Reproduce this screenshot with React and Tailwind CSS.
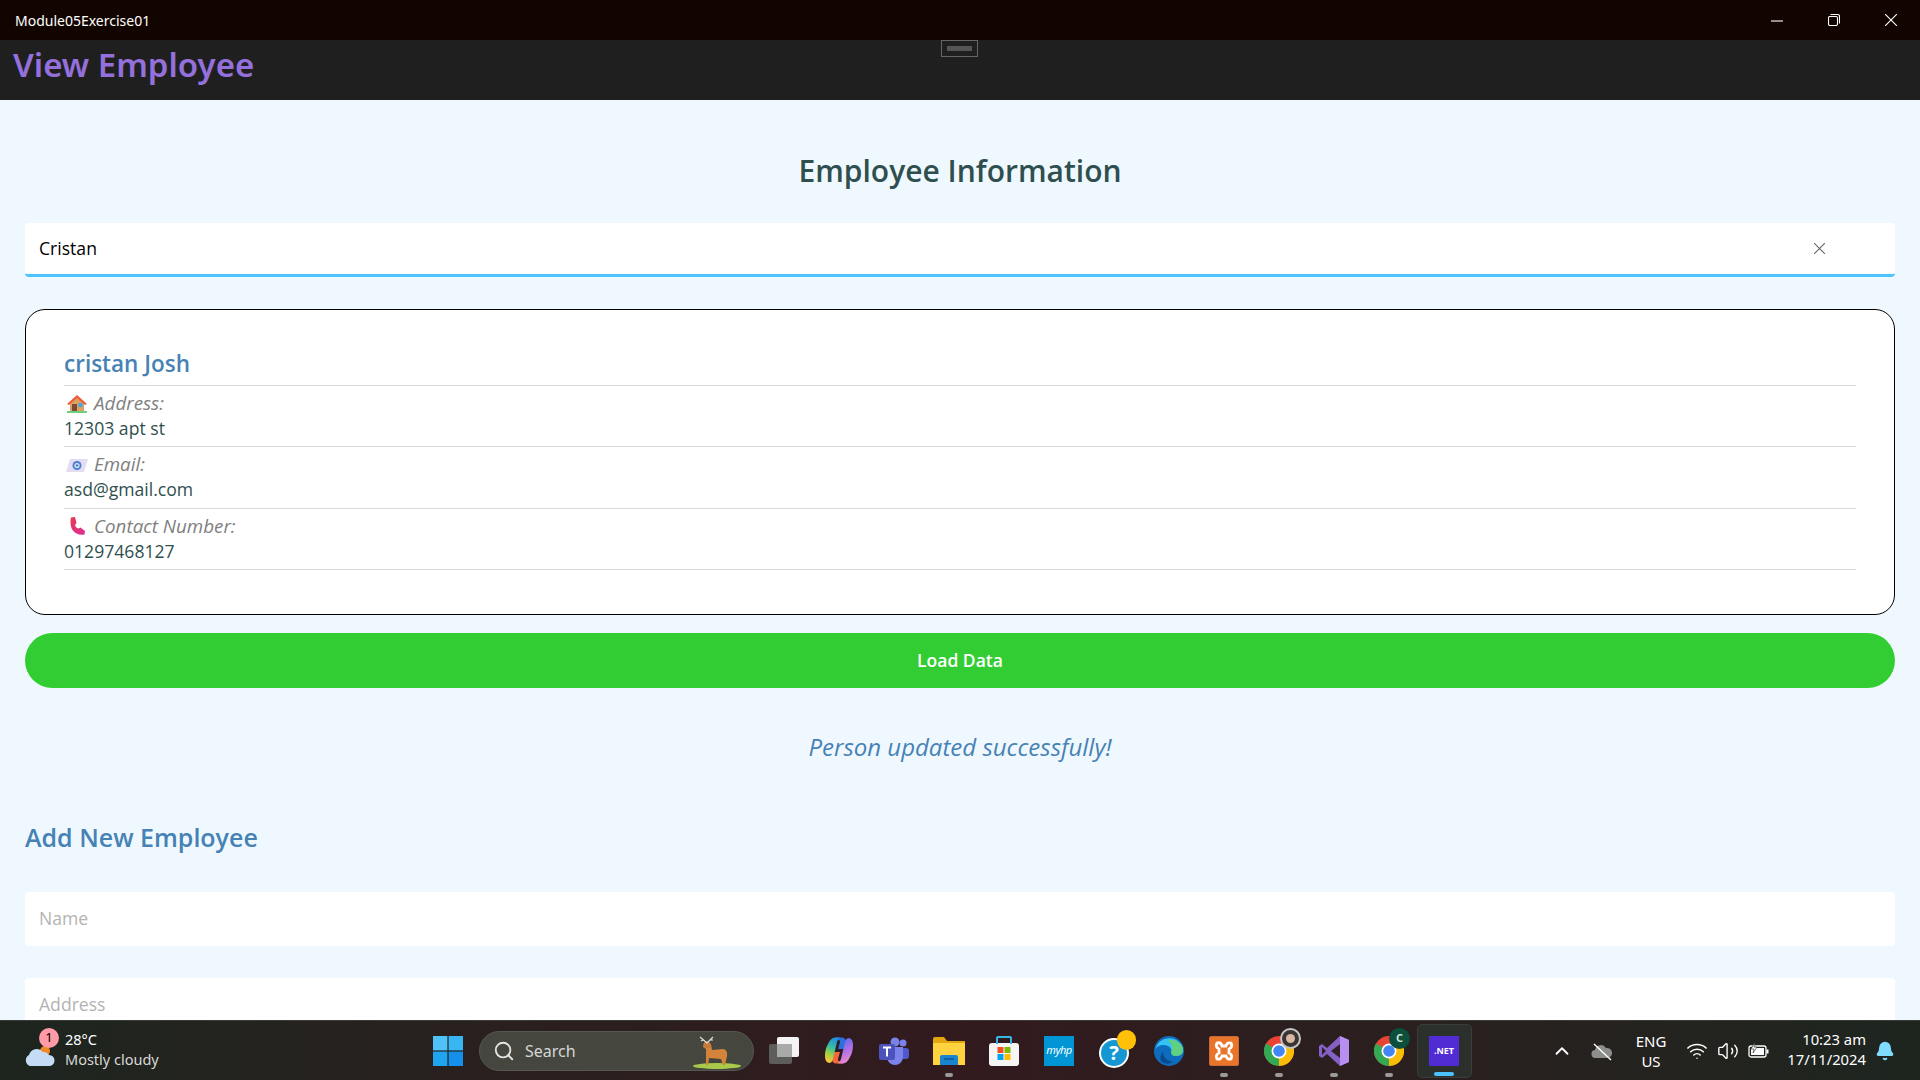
import React from "react";
import { Search, ChevronUp, Wifi, Volume2, Bell } from "lucide-react";

const mainFont = "font-['Open_Sans','Noto_Sans',sans-serif]";

function HouseIcon() {
  return (
    <svg width="22" height="20" viewBox="0 0 22 20">
      <rect x="1" y="17" width="20" height="2" fill="#6fcf7a" />
      <path d="M4 9 L11 3 L18 9 V17 H4 Z" fill="#e0a060" />
      <path d="M1 10 L11 1 L21 10 L19 11 L11 4 L3 11 Z" fill="#ef5a38" />
      <rect x="6" y="10" width="5" height="7" fill="#7a4a3a" />
      <rect x="12.5" y="9" width="4" height="4" fill="#3fa9e8" />
    </svg>
  );
}

function MailIcon() {
  return (
    <svg width="22" height="14" viewBox="0 0 22 14">
      <path d="M4 1 H22 L18 14 H0 Z" fill="#e4dcf2" />
      <circle cx="11" cy="7.5" r="4.5" fill="#4d7fd0" />
      <circle cx="11" cy="7.5" r="2.6" fill="#d8e4f8" />
      <circle cx="11" cy="7.5" r="1.3" fill="#4d7fd0" />
    </svg>
  );
}

function PhoneIcon() {
  return (
    <svg width="22" height="18" viewBox="0 0 22 18">
      <defs>
        <linearGradient id="phoneFill" x1="0" y1="0" x2="1" y2="1">
          <stop offset="0" stopColor="#e8394f" />
          <stop offset="1" stopColor="#dd2f9a" />
        </linearGradient>
      </defs>
      <path
        d="M5 0.5 L9 0 L10.5 6 L9 8 C9.5 10 10.5 11 12.5 11.5 L14.5 10.5 L19 14 L18.5 17.5 C14 18.5 9 17 6.5 13 C4.5 9.5 4 5 5 0.5 Z"
        fill="url(#phoneFill)"
      />
    </svg>
  );
}

function InfoRow({ icon, label, value }) {
  return (
    <div className="border-b border-[#d9d9d9] h-[61.33px] pt-[5px]">
      <div className="flex items-center h-[25px] text-[18.8px] italic text-[#808080] leading-none">
        <span className="w-[30px] pl-[2px] flex justify-start">{icon}</span>
        <span>{label}</span>
      </div>
      <div className="text-[17.6px] text-[#2f4f4f] leading-[24px]">{value}</div>
    </div>
  );
}

function TextBox({ placeholder }) {
  return (
    <div className="h-[54px] bg-white rounded-[4px] pl-[14px] pb-[2px] flex items-center text-[17.6px] text-[#b3b3b3] shrink-0">
      {placeholder}
    </div>
  );
}

function TaskIcon({ children, running, active }) {
  return (
    <div
      className={`relative w-[55px] h-[54px] flex items-center justify-center rounded-[5px] ${active ? "bg-[#2c302d] border border-[#3a3d3a]" : ""}`}
    >
      {children}
      {running && !active && (
        <span className="absolute bottom-[1px] w-[8px] h-[4px] rounded-full bg-[#9a9a9a]" />
      )}
      {active && (
        <span className="absolute bottom-[1px] w-[20px] h-[4px] rounded-full bg-[#4cc2ff]" />
      )}
    </div>
  );
}

function ChromeIcon({ children }) {
  return (
    <div className="relative w-[30px] h-[30px]">
      <svg width="30" height="30" viewBox="0 0 30 30">
        <circle cx="15" cy="15" r="15" fill="#ea4335" />
        <path d="M15 15 L2 7.5 A15 15 0 0 0 15 30 Z" fill="#34a853" />
        <path d="M15 15 L28 7.5 A15 15 0 0 1 15 30 Z" fill="#fbbc05" />
        <path d="M15 8 A7 7 0 0 1 28 7.5 L15 7.5 Z" fill="#ea4335" />
        <circle cx="15" cy="15" r="7.5" fill="#fff" />
        <circle cx="15" cy="15" r="5.8" fill="#4285f4" />
      </svg>
      {children}
    </div>
  );
}

function CopilotIcon() {
  return (
    <svg width="30" height="27" viewBox="0 0 30 27">
      <defs>
        <linearGradient id="copilotLeft" x1="0.6" y1="0" x2="0.3" y2="1">
          <stop offset="0" stopColor="#1f8fe0" />
          <stop offset="0.4" stopColor="#38c0a0" />
          <stop offset="0.7" stopColor="#a8d040" />
          <stop offset="1" stopColor="#ffc23c" />
        </linearGradient>
        <linearGradient id="copilotRight" x1="0.4" y1="0" x2="0.7" y2="1">
          <stop offset="0" stopColor="#5a6ae8" />
          <stop offset="0.5" stopColor="#b070e8" />
          <stop offset="1" stopColor="#f090c8" />
        </linearGradient>
      </defs>
      <path d="M11 0.5 H18 Q21 0.5 22 4 L24 12 H14 L16 5 Q16.5 3 14 3 Z" fill="#2a6fe0" />
      <path d="M19 26.5 H12 Q9 26.5 8 23 L6 15 H16 L14 22 Q13.5 24 16 24 Z" fill="#f2683c" />
      <path d="M11 0.5 H16 Q14 1.5 13 5 L9 22 Q8 26 5 26 Q1 25 1 19 Q1 12 4 7 Q7 0.5 11 0.5 Z" fill="url(#copilotLeft)" />
      <path d="M19 26.5 H14 Q16 25.5 17 22 L21 5 Q22 1 25 1 Q29 2 29 8 Q29 15 26 20 Q23 26.5 19 26.5 Z" fill="url(#copilotRight)" />
    </svg>
  );
}

function Taskbar() {
  return (
    <div className="h-[60px] shrink-0 flex items-center border-t border-[#3a3a38] bg-gradient-to-r from-[#1d251f] via-[#321a1e] to-[#1d251f] font-['Noto_Sans','Open_Sans',sans-serif] text-white">
      <div className="w-[433px] shrink-0 flex items-center pl-[23px] relative">
        <div className="relative w-[42px] h-[44px] -translate-y-[4px]">
          <svg width="32" height="22" viewBox="0 0 32 22" className="absolute left-0 top-[20px]">
            <circle cx="22" cy="6" r="5" fill="#f08a24" />
            <path d="M7 21 A6 6 0 0 1 6 10 A8 8 0 0 1 20 7 A7 7 0 0 1 26 10 A5.5 5.5 0 0 1 26 21 Z" fill="#c4dcf6" />
          </svg>
          <span className="absolute left-[16px] top-[3px] w-[20px] h-[20px] rounded-full bg-[#ff9aa6] text-black text-[13px] flex items-center justify-center leading-none">
            1
          </span>
        </div>
        <div className="text-[14.5px] leading-[20px] -translate-y-[2px]">
          <div>28°C</div>
          <div className="text-[#d8d8d8]">Mostly cloudy</div>
        </div>
      </div>

      <svg width="30" height="30" viewBox="0 0 30 30" className="shrink-0">
        <rect x="0" y="0" width="14.4" height="14.4" fill="#4fc3f7" />
        <rect x="15.6" y="0" width="14.4" height="14.4" fill="#38b6f4" />
        <rect x="0" y="15.6" width="14.4" height="14.4" fill="#1fa5f0" />
        <rect x="15.6" y="15.6" width="14.4" height="14.4" fill="#1590ea" />
      </svg>

      <div className="ml-[16px] w-[275px] h-[40px] shrink-0 rounded-full bg-[#45473f] border border-[#555750] flex items-center pl-[13px] relative">
        <Search size={22} strokeWidth={2} className="text-[#e4e4e4]" />
        <span className="ml-[10px] text-[16px] text-[#d6d6d6]">Search</span>
        <svg width="50" height="38" viewBox="0 0 50 38" className="absolute right-[11px] top-0">
          <ellipse cx="25" cy="34" rx="24" ry="3" fill="#a8c94a" />
          <path d="M14 17 L14 33 L16 33 L17 26 L29 27 L31 33 L33 33 L35 24 Q36 18 31 17 L20 18 L19 12 L12 12 L11 15 Z" fill="#d4843a" />
          <circle cx="15" cy="13" r="3.6" fill="#c87a3a" />
          <path d="M15 11 L8 5 M15 11 L21 5 M11 8 L9 9 M18 8 L21 8" stroke="#e0ddd6" strokeWidth="1.2" fill="none" />
        </svg>
      </div>

      <div className="ml-[2.5px] flex items-center">
        <TaskIcon>
          <div className="relative w-[30px] h-[27px]">
            <div className="absolute left-0 bottom-0 w-[23px] h-[20px] rounded-[2px] bg-[#5d5d5b]" />
            <div className="absolute right-0 top-0 w-[22px] h-[20px] rounded-[2px] bg-[#f4f4f4]" />
            <div className="absolute left-[8px] top-[7px] w-[15px] h-[13px] bg-[#a9a9a9]" />
          </div>
        </TaskIcon>
        <TaskIcon>
          <CopilotIcon />
        </TaskIcon>
        <TaskIcon>
          <svg width="30" height="28" viewBox="0 0 30 28">
            <circle cx="24" cy="6" r="3.5" fill="#7b83eb" />
            <rect x="19" y="11" width="11" height="11" rx="3" fill="#5059c9" />
            <circle cx="16" cy="5" r="4.5" fill="#7b83eb" />
            <path d="M8 10 H24 V20 A8 8 0 0 1 8 20 Z" fill="#7b83eb" />
            <rect x="0" y="7" width="16" height="16" rx="2" fill="#4b53bc" />
            <path d="M4 10.5 H12 M8 10.5 V19.5" stroke="#fff" strokeWidth="2" />
          </svg>
        </TaskIcon>
        <TaskIcon running>
          <svg width="32" height="28" viewBox="0 0 32 28">
            <path d="M0 2 Q0 0 2 0 H11 L14 4 H32 V28 H0 Z" fill="#e3a60f" />
            <rect x="0" y="6" width="32" height="22" fill="#ffd23f" />
            <path d="M7 28 V20 Q7 18 9 18 H23 Q25 18 25 20 V28 Z" fill="#1785d0" />
            <rect x="11" y="21" width="10" height="2" fill="#0f5fa0" />
          </svg>
        </TaskIcon>
        <TaskIcon>
          <svg width="30" height="30" viewBox="0 0 30 30">
            <rect x="0" y="7" width="30" height="23" rx="3" fill="#f5f5f5" />
            <path d="M8 8 V2 Q8 1 9 1 H21 Q22 1 22 2 V8" fill="none" stroke="#35b5e8" strokeWidth="2" />
            <rect x="8.5" y="11" width="6" height="6" fill="#f25022" />
            <rect x="15.5" y="11" width="6" height="6" fill="#7fba00" />
            <rect x="8.5" y="18" width="6" height="6" fill="#00a4ef" />
            <rect x="15.5" y="18" width="6" height="6" fill="#ffb900" />
          </svg>
        </TaskIcon>
        <TaskIcon>
          <div className="w-[30px] h-[30px] bg-[#0096d6] flex items-center justify-center text-[11px] italic text-white tracking-tighter">
            myhp
          </div>
        </TaskIcon>
        <TaskIcon>
          <div className="relative w-[34px] h-[34px] translate-x-[2px]">
            <div className="absolute left-0 bottom-0 w-[30px] h-[30px] rounded-full bg-[#1597d3] border-2 border-white flex items-center justify-center text-[20px] font-bold text-white leading-none">
              ?
            </div>
            <div className="absolute right-[-3px] top-[-4px] w-[19px] h-[20px] rounded-full bg-[#ffc107]" />
          </div>
        </TaskIcon>
        <TaskIcon>
          <svg width="30" height="30" viewBox="0 0 30 30">
            <circle cx="15" cy="15" r="15" fill="#0f6cbd" />
            <path d="M1 14 A14.5 14.5 0 0 1 29 12 Q30 20 22 20 Q16 20 18 15 Q16 9 10 9 Q3 9 1 14 Z" fill="#35c1f1" />
            <path d="M14 4 A13 13 0 0 1 29 12 Q30 20 22 20 Q17 20 17 16 Q20 9 14 4 Z" fill="#5ed07f" />
            <path d="M9 16 Q9 24 19 26 Q12 30 7 25 Q5 20 9 16 Z" fill="#0a4a8f" />
          </svg>
        </TaskIcon>
        <TaskIcon running>
          <div className="w-[30px] h-[30px] rounded-[2px] bg-[#e8752a] border border-[#c9693a] flex items-center justify-center">
            <svg width="22" height="22" viewBox="0 0 22 22">
              <path
                d="M4 3 Q8 2 9 6 H13 Q14 2 18 3 Q20 7 16 9 V13 Q20 15 18 19 Q14 20 13 16 H9 Q8 20 4 19 Q2 15 6 13 V9 Q2 7 4 3 Z"
                fill="none"
                stroke="#fff"
                strokeWidth="2.8"
              />
            </svg>
          </div>
        </TaskIcon>
        <TaskIcon running>
          <ChromeIcon>
            <div className="absolute right-[-7px] top-[-8px] w-[21px] h-[21px] rounded-full bg-[#3a3533] border-2 border-[#c4c4c4] overflow-hidden">
              <div className="w-[9px] h-[9px] rounded-full bg-[#d8b8a4] mx-auto mt-[4px]" />
            </div>
          </ChromeIcon>
        </TaskIcon>
        <TaskIcon running>
          <svg width="30" height="30" viewBox="0 0 30 30">
            <path d="M21 0 L30 4 V26 L21 30 L8 18 L3 22 L0 20 V10 L3 8 L8 12 Z" fill="#8661c5" />
            <path d="M21 8 V22 L12 15 Z" fill="#2d2024" />
            <path d="M3 11 V19 L7 15 Z" fill="#2d2024" />
            <path d="M21 0 L30 4 V26 L21 30 V22 L21 8 Z" fill="#b88ef0" />
          </svg>
        </TaskIcon>
        <TaskIcon running>
          <ChromeIcon>
            <div className="absolute right-[-6px] top-[-8px] w-[21px] h-[21px] rounded-full bg-[#0b4f3c] text-[#cfe3da] text-[11px] font-bold flex items-center justify-center">
              C
            </div>
          </ChromeIcon>
        </TaskIcon>
        <TaskIcon active>
          <div className="w-[30px] h-[30px] bg-[#512bd4] flex items-center justify-center text-[9px] font-bold text-white">
            .NET
          </div>
        </TaskIcon>
      </div>

      <div className="ml-auto flex items-center">
        <ChevronUp size={22} strokeWidth={2} className="text-white" />
        <div className="ml-[18px] relative w-[22px] h-[16px]">
          <svg width="22" height="18" viewBox="0 0 22 18">
            <path d="M5 15 A4 4 0 0 1 4 7 A6 6 0 0 1 15 5 A5 5 0 0 1 17 15 Z" fill="#8c8f8b" />
            <path d="M3 1 L20 17" stroke="#fff" strokeWidth="1.4" />
          </svg>
        </div>
        <div className="ml-[13px] w-[50px] text-center text-[15px] leading-[20px]">
          <div>ENG</div>
          <div>US</div>
        </div>
        <Wifi size={22} strokeWidth={1.6} className="ml-[10px]" />
        <Volume2 size={22} strokeWidth={1.5} className="ml-[9px]" />
        <svg width="22" height="18" viewBox="0 0 22 18" className="ml-[9px]">
          <rect x="1" y="4" width="17" height="11" rx="2" fill="none" stroke="#fff" strokeWidth="1.3" />
          <rect x="3" y="6" width="13" height="7" fill="#fff" />
          <rect x="18.5" y="7.5" width="2" height="4" fill="#fff" />
          <path d="M7 0 L3 7 H6 L5 11 L9 5 H6 Z" fill="#fff" stroke="#1d251f" strokeWidth="0.6" />
        </svg>
        <div className="text-right text-[14.8px] leading-[20px] w-[96px] -translate-y-[2px]">
          <div>10:23 am</div>
          <div>17/11/2024</div>
        </div>
        <Bell size={20} fill="#7fdcff" stroke="#7fdcff" className="ml-[9px] mr-[25px]" />
      </div>
    </div>
  );
}

export default function App() {
  return (
    <div className={`h-screen flex flex-col overflow-hidden bg-[#f0f8ff] ${mainFont}`}>
      {/* window title bar */}
      <div className="h-[40px] shrink-0 bg-[#120500] flex items-center pl-[15px] pr-[23px] text-white font-['Noto_Sans',sans-serif]">
        <span className="text-[14px]">Module05Exercise01</span>
        <div className="ml-auto flex items-center gap-[45px] text-white">
          <svg width="12" height="12" viewBox="0 0 12 12" stroke="currentColor" strokeWidth="1.1">
            <path d="M0 7 H12" />
          </svg>
          <svg width="12" height="12" viewBox="0 0 12 12" fill="none" stroke="currentColor" strokeWidth="1.1">
            <rect x="0.5" y="2.5" width="9" height="9" rx="1.5" />
            <path d="M2.5 0.5 H9.5 Q11.5 0.5 11.5 2.5 V9.5" />
          </svg>
          <svg width="12" height="12" viewBox="0 0 12 12" stroke="currentColor" strokeWidth="1.1">
            <path d="M0 0 L12 12 M12 0 L0 12" />
          </svg>
        </div>
      </div>

      {/* nav bar */}
      <div className="h-[60px] shrink-0 bg-[#1f1f1f] relative pl-[13px] font-['Noto_Sans',sans-serif]">
        <div className="text-[33px] font-semibold text-[#9370db] leading-[50px]">View Employee</div>
        <div className="absolute left-[941px] top-0 w-[37px] h-[17px] border border-[#666] flex items-center justify-center">
          <div className="w-[25px] h-[5px] bg-[#555]" />
        </div>
      </div>

      <div className="flex-1 min-h-0 overflow-hidden px-[25px] flex flex-col">
        <h1 className="mt-[50px] text-center text-[30px] font-semibold text-[#2f4f4f] leading-[42px]">
          Employee Information
        </h1>

        <div className="mt-[31px] h-[54px] shrink-0 bg-white rounded-[4px] border-b-[3px] border-[#4fc3ff] flex items-center pl-[14px] pr-[70px] text-[17.6px] text-black">
          <span>Cristan</span>
          <svg width="11" height="11" viewBox="0 0 11 11" stroke="#666" strokeWidth="1.1" className="ml-auto">
            <path d="M0 0 L11 11 M11 0 L0 11" />
          </svg>
        </div>

        <div className="mt-[32px] h-[306px] shrink-0 bg-white border border-black rounded-[20px] pt-[37px] px-[38px]">
          <div className="h-[39px] border-b border-[#d9d9d9] text-[22.5px] font-semibold text-[#4682b4] leading-[34px]">
            cristan Josh
          </div>
          <InfoRow icon={<HouseIcon />} label="Address:" value="12303 apt st" />
          <InfoRow icon={<MailIcon />} label="Email:" value="asd@gmail.com" />
          <InfoRow icon={<PhoneIcon />} label="Contact Number:" value="01297468127" />
        </div>

        <div className="mt-[18px] h-[55px] shrink-0 rounded-full bg-[#32cd32] flex items-center justify-center text-[17.5px] font-semibold text-white">
          Load Data
        </div>

        <div className="mt-[42px] text-center text-[24px] italic text-[#4682b4] leading-[34px]">
          Person updated successfully!
        </div>

        <h2 className="mt-[55px] text-[25px] font-semibold text-[#4682b4] leading-[36px]">Add New Employee</h2>

        <div className="mt-[37px] flex flex-col gap-[32px]">
          <TextBox placeholder="Name" />
          <TextBox placeholder="Address" />
        </div>
      </div>

      <Taskbar />
    </div>
  );
}
